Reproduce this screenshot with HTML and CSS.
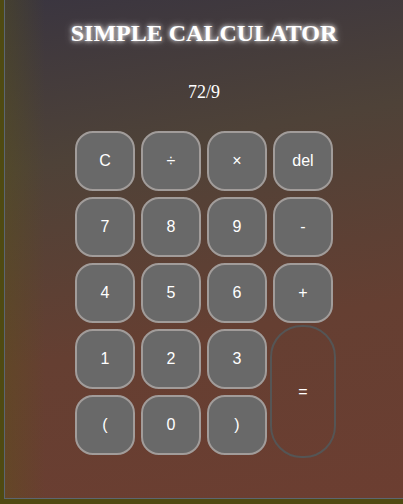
FILE: index.html
```html
<!DOCTYPE html>
<html>
<head>
<meta charset="utf-8">
<link rel="stylesheet" href="styles.css">
</head>
<body>
<div class="app">
  <h1 class="title">SIMPLE CALCULATOR</h1>
  <div class="display">72/9</div>
  <div class="keys">
    <button class="key">C</button>
    <button class="key">÷</button>
    <button class="key">×</button>
    <button class="key">del</button>
    <button class="key">7</button>
    <button class="key">8</button>
    <button class="key">9</button>
    <button class="key">-</button>
    <button class="key">4</button>
    <button class="key">5</button>
    <button class="key">6</button>
    <button class="key">+</button>
    <button class="key">1</button>
    <button class="key">2</button>
    <button class="key">3</button>
    <button class="key equals">=</button>
    <button class="key">(</button>
    <button class="key">0</button>
    <button class="key">)</button>
  </div>
</div>
</body>
</html>
```

FILE: styles.css
```css
html, body {
  margin: 0;
  padding: 0;
  height: 100%;
  overflow: hidden;
}
body {
  background: #4f4a12;
  font-family: "Liberation Serif", "Times New Roman", serif;
}
.app {
  box-sizing: border-box;
  margin-left: 4px;
  width: 399px;
  height: 499px;
  border-left: 1px solid #5c6670;
  border-bottom: 1px solid #5c6670;
  background:
    linear-gradient(90deg, rgba(90, 85, 20, 0.35) 0px, rgba(90, 85, 20, 0) 40px),
    linear-gradient(170deg, #3a3540 0%, #4e4238 30%, #653f32 65%, #6c3e31 100%);
  display: flex;
  flex-direction: column;
  align-items: center;
}
.title {
  margin: 18px 0 0;
  font-size: 24px;
  line-height: 30px;
  font-weight: bold;
  color: #ffffff;
  text-shadow: 0 0 4px rgba(255, 255, 255, 0.9), 0 0 8px rgba(255, 255, 255, 0.5);
}
.display {
  margin-top: 34px;
  font-size: 18px;
  line-height: 20px;
  color: #ffffff;
}
.keys {
  margin-top: 29px;
  display: grid;
  grid-template-columns: repeat(4, 60px);
  grid-template-rows: repeat(5, 60px);
  gap: 6px;
}
.key {
  box-sizing: border-box;
  margin: 0;
  padding: 0;
  background: #696969;
  border: 2px solid #a19c9a;
  border-radius: 18px;
  color: #ffffff;
  font-family: "Liberation Sans", Arial, sans-serif;
  font-size: 16px;
}
.equals {
  grid-column: 4;
  grid-row: 4 / span 2;
  margin: -4px -3px -3px -3px;
  background: transparent;
  border: 2px solid #555555;
  border-radius: 32px;
}
```
